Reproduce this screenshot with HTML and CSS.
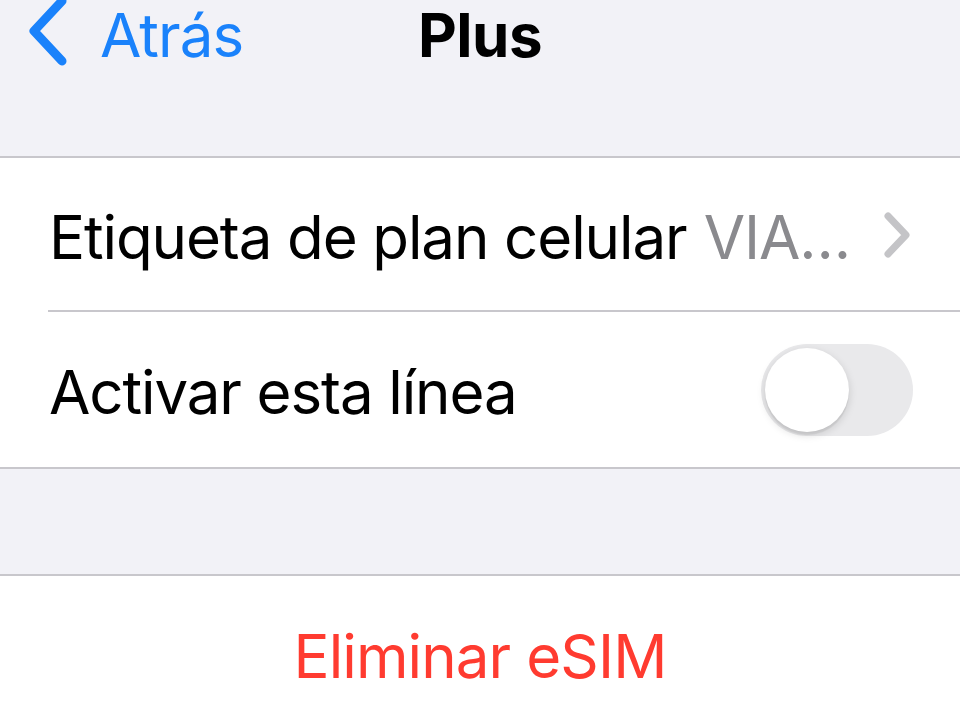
FILE: index.html
```html
<!DOCTYPE html>
<html lang="es">
<head>
<meta charset="utf-8">
<link rel="stylesheet" href="styles.css">
</head>
<body>
<header class="nav">
  <a class="back">
    <svg class="back-icon" width="44" height="72" viewBox="0 0 44 72"><path d="M36 4 L8 34 L36 64" fill="none" stroke="#1a82fb" stroke-width="9" stroke-linecap="round" stroke-linejoin="round"/></svg>
    <span class="back-label">Atrás</span>
  </a>
  <h1 class="title">Plus</h1>
</header>
<section class="group">
  <div class="row row-inset">
    <span class="label">Etiqueta de plan celular</span>
    <span class="value">VIA…</span>
    <svg class="chev" width="30" height="48" viewBox="0 0 30 48"><path d="M6 5 L24 24 L6 43" fill="none" stroke="#c4c4c7" stroke-width="7" stroke-linecap="round" stroke-linejoin="round"/></svg>
  </div>
  <div class="row">
    <span class="label">Activar esta línea</span>
    <span class="toggle"><span class="knob"></span></span>
  </div>
</section>
<div class="gap"></div>
<section class="group group-last">
  <div class="row row-center">
    <span class="danger">Eliminar eSIM</span>
  </div>
</section>
</body>
</html>
```
FILE: styles.css
```css
html, body {
  margin: 0;
  padding: 0;
  background: #f2f2f7;
  font-family: Inter, "Noto Sans", sans-serif;
  overflow: hidden;
}
.nav {
  height: 156px;
  position: relative;
  border-bottom: 2px solid #c8c7cc;
  box-sizing: content-box;
}
.back {
  position: absolute;
  left: 26px;
  top: 0;
  display: flex;
  align-items: center;
  height: 70px;
  color: #1a82fb;
}
.back-icon {
  display: block;
  margin-top: -4px;
}
.back-label {
  font-size: 60px;
  margin-left: 30px;
  line-height: 70px;
  letter-spacing: -0.9px;
}
.title {
  margin: 0;
  text-align: center;
  font-size: 60px;
  font-weight: 700;
  line-height: 70px;
  color: #000;
  letter-spacing: -0.5px;
}
.group {
  background: #fff;
}
.row {
  height: 154px;
  display: flex;
  align-items: center;
  padding-left: 49px;
  padding-right: 48px;
  position: relative;
}
.row-inset::after {
  content: "";
  position: absolute;
  left: 48px;
  right: 0;
  bottom: 0;
  height: 2px;
  background: #c8c7cc;
}
.row + .row {
  height: 155px;
}
.label {
  font-size: 60px;
  color: #000;
  flex: 1;
  letter-spacing: -1.1px;
  margin-top: 4px;
}
.value {
  font-size: 60px;
  color: #8a8a8e;
  letter-spacing: -1.1px;
  margin-top: 4px;
  margin-right: 32px;
}
.chev {
  display: block;
}
.toggle {
  width: 152px;
  height: 92px;
  border-radius: 46px;
  background: #e9e9eb;
  position: relative;
  margin-right: -1px;
}
.knob {
  position: absolute;
  left: 4px;
  top: 4px;
  width: 84px;
  height: 84px;
  border-radius: 50%;
  background: #fff;
  box-shadow: 0 3px 8px rgba(0,0,0,0.15), 0 3px 1px rgba(0,0,0,0.06);
}
.gap {
  height: 105px;
  border-top: 2px solid #c8c7cc;
  border-bottom: 2px solid #c8c7cc;
}
.group-last .row {
  height: 150px;
}
.row-center {
  justify-content: center;
  padding-left: 0;
  padding-right: 0;
  align-items: flex-start;
}
.danger {
  font-size: 60px;
  color: #ff3b30;
  letter-spacing: -0.9px;
  margin-top: 44px;
}
```
